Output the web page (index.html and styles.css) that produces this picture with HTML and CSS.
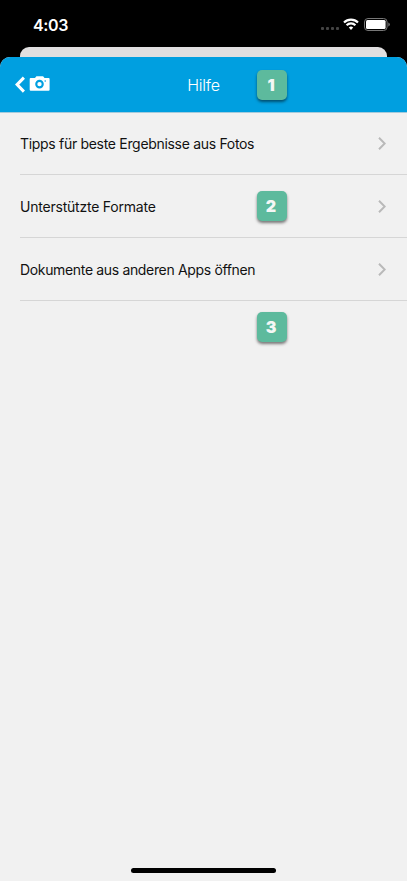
FILE: index.html
```html
<!DOCTYPE html>
<html lang="de">
<head>
<meta charset="utf-8">
<title>Hilfe</title>
<link rel="stylesheet" href="styles.css">
</head>
<body>
<div class="screen">
  <div class="status">
    <span class="time">4:03</span>
    <div class="indicators">
      <div class="signal"><i></i><i></i><i></i><i></i></div>
      <svg class="wifi" width="16" height="12" viewBox="0 0 16 12" fill="none" stroke="#fff" stroke-width="2.2"><path d="M1 4.500a10 10 0 0 1 14 0M3.600 7.200a6.200 6.200 0 0 1 8.800 0"/><path d="M8 12 5.800 9.600a3.100 3.100 0 0 1 4.400 0z" fill="#fff" stroke="none"/></svg>
      <svg class="battery" width="26" height="13" viewBox="0 0 26 13"><rect x=".5" y=".5" width="22.6" height="12" rx="3.5" fill="none" stroke="#777"/><rect x="2" y="2" width="19.6" height="9" rx="1.5" fill="#fff"/><path d="M24.300 4.400a2.200 2.200 0 0 1 0 4.200z" fill="#777"/></svg>
    </div>
  </div>
  <div class="card-behind"></div>
  <main class="sheet">
    <header class="header">
      <svg class="back" width="36" height="18" viewBox="0 0 36 18"><path d="M8.900 1.600 2.100 8.600l6.800 7" fill="none" stroke="#fff" stroke-width="3"/><path fill="#fff" fill-rule="evenodd" d="M15.700 2H20L21.400.3h6.700L29.500 2h4.100q1 0 1 1v10.800q0 1-1 1H15.700q-1 0-1-1V3q0-1 1-1zM24.500 3.800a4.300 4.300 0 1 0 0 8.600 4.300 4.300 0 0 0 0-8.600zM30.200 4.200a.8.8 0 1 0 0 1.600.8.8 0 0 0 0-1.600z"/><circle cx="24.500" cy="8.100" r="2.200" fill="#fff"/></svg>
      <h1 class="title">Hilfe</h1>
      <span class="badge badge-header">1</span>
    </header>
    <ul class="list">
      <li class="row"><span class="label tips">Tipps für beste Ergebnisse aus Fotos</span><svg class="chevron" width="8" height="13" viewBox="0 0 8 13"><path d="M1 .8 6.700 6.500 1 12.200"/></svg></li>
      <li class="row"><span class="label formats">Unterstützte Formate</span><span class="badge badge-row">2</span><svg class="chevron" width="8" height="13" viewBox="0 0 8 13"><path d="M1 .8 6.700 6.500 1 12.200"/></svg></li>
      <li class="row"><span class="label documents">Dokumente aus anderen Apps öffnen</span><svg class="chevron" width="8" height="13" viewBox="0 0 8 13"><path d="M1 .8 6.700 6.500 1 12.200"/></svg></li>
    </ul>
    <span class="badge badge-below">3</span>
    <div class="home"></div>
  </main>
</div>
</body>
</html>
```
FILE: styles.css
```css
* { box-sizing: border-box; }
body { margin: 0; background: #000; font-family: Inter, "Liberation Sans", sans-serif; }
.screen { width: 407px; height: 881px; display: flex; flex-direction: column; overflow: hidden; }
.status { height: 47px; flex: none; display: flex; justify-content: space-between; padding: 0 17px 0 33px; color: #fff; }
.time { font-size: 16px; font-weight: 600; line-height: 20px; letter-spacing: -.35px; margin-top: 15px; }
.indicators { display: flex; align-items: flex-start; padding-top: 18px; }
.signal { display: flex; gap: 2px; margin: 9px 4px 0 0; }
.signal i { width: 3px; height: 3px; background: #444; border-radius: 1px; }
.wifi { margin-right: 5px; }
.card-behind { height: 20px; flex: none; margin: 0 20px -10px; background: #e0dfe0; border-radius: 9px 9px 0 0; }
.sheet { position: relative; flex: 1; display: flex; flex-direction: column; background: #f1f1f1; border-radius: 10px 10px 0 0; overflow: hidden; }
.header { position: relative; height: 56px; flex: none; display: flex; justify-content: center; align-items: center; background: #009fe0; border-bottom: 1px solid #a5cbdc; color: #fff; }
.back { position: absolute; left: 15px; top: 19px; }
.title { margin: 1px 0 0; font-size: 16px; font-weight: 300; line-height: 20px; letter-spacing: -.2px; }
.badge { width: 30px; height: 30px; border-radius: 5px; background: #5dba9d; color: #f4f7f5; box-shadow: 0 2px 3px rgba(0,0,0,.5); font-size: 16px; font-weight: 900; line-height: 30px; text-align: center; padding-right: 2px; }
.badge-header { position: absolute; left: 257px; top: 13px; }
.list { list-style: none; margin: 0; padding: 0 0 0 20px; }
.row { height: 63px; display: flex; align-items: center; justify-content: space-between; padding-right: 21px; border-bottom: 1px solid #d6d6d6; position: relative; }
.row:first-child { height: 62px; }
.label { font-size: 14px; line-height: 20px; color: #111; white-space: nowrap; padding-top: 1px; }
.tips { letter-spacing: -.31px; }
.formats { letter-spacing: -.22px; }
.documents { letter-spacing: -.34px; }
.badge-row { position: absolute; left: 237px; top: 16px; }
.chevron { fill: none; stroke: #b9b9b9; stroke-width: 2; }
.badge-below { margin: 11px 0 0 257px; }
.home { width: 145px; height: 5px; margin: auto auto 8px; border-radius: 3px; background: #000; }
```
